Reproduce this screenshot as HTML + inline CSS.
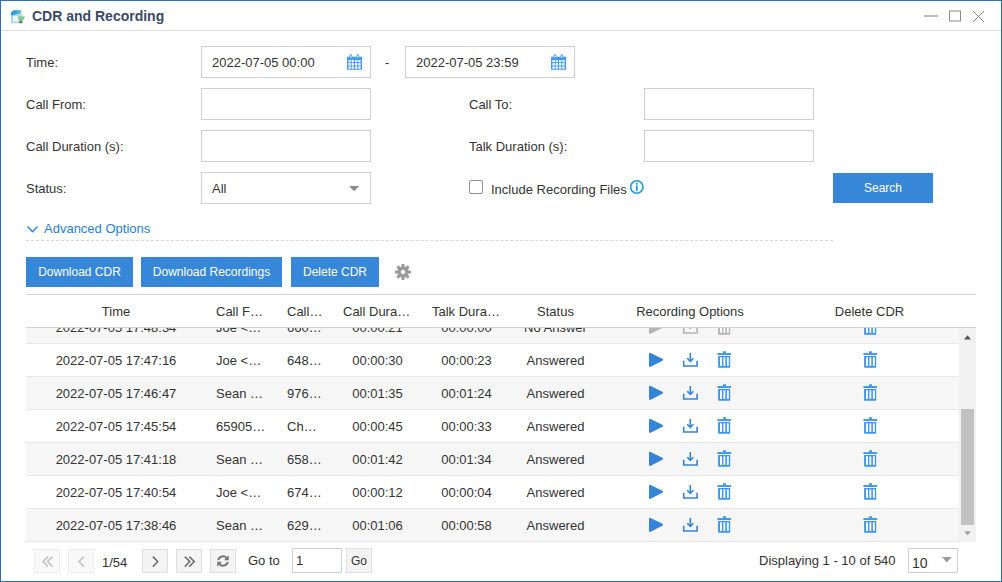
<!DOCTYPE html>
<html><head><meta charset="utf-8">
<style>
*{box-sizing:border-box;margin:0;padding:0}
html,body{width:1002px;height:582px;overflow:hidden;background:#fff}
body{font-family:"Liberation Sans",sans-serif;color:#333;font-size:13px;position:relative}
.win{position:absolute;left:0;top:0;width:1002px;height:582px;border:1px solid #2c71b4;background:#fff}
.a{position:absolute;white-space:nowrap}
.title{left:32px;top:8px;font-weight:bold;font-size:14px;color:#3b4a67;line-height:17px}
.hline{position:absolute;left:1px;top:30px;width:1000px;height:1px;background:#dcdcdc}
.lbl{font-size:13px;line-height:15px;color:#333}
.inp{position:absolute;border:1px solid #cfcfcf;background:#fff;height:32px;width:170px}
.inp span{position:absolute;left:10px;top:8px;font-size:13px;line-height:15px;color:#333}
.btn{position:absolute;background:#3787d8;color:#fff;font-size:12px;text-align:center;height:30px;line-height:30px}
.grid{position:absolute;left:26px;top:294px;width:950px;height:248px;border-top:1px solid #d0d0d0}
.ghead{position:absolute;left:0;top:0;width:950px;height:33px;border-bottom:1px solid #d0d0d0;background:#fff;z-index:2}
.col{position:absolute;top:1px;height:31px;line-height:32px;text-align:center;overflow:hidden;text-overflow:ellipsis;white-space:nowrap;padding:0 10px;font-size:13px}
.body{position:absolute;left:0;top:33px;width:933px;height:214px;overflow:hidden}
.row{position:absolute;left:0;width:933px;height:33px;border-bottom:1px solid #e8e8e8;background:#fff}
.row.alt{background:#f6f6f6}
.cell{position:absolute;top:1px;height:32px;line-height:32px;overflow:hidden;text-overflow:ellipsis;white-space:nowrap;padding:0 10px;font-size:13px;color:#333}
.c0{left:0;width:180px;text-align:center}
.c1{left:180px;width:71px;text-align:left}
.c2{left:251px;width:56px;text-align:left}
.c3{left:307px;width:89px;text-align:center}
.c4{left:396px;width:89px;text-align:center}
.c5{left:485px;width:89px;text-align:center}
.c6{left:574px;width:180px;text-align:center}
.c7{left:754px;width:179px;text-align:center}
.ico{position:absolute}
.sb{position:absolute;left:933px;top:33px;width:17px;height:214px;background:#f1f1f1}
.pbtn{position:absolute;top:549px;width:26px;height:24px;border:1px solid #e0e0e0;background:#f4f4f4}
.pbtn.dis{border-color:#ececec;background:#f9f9f9}
</style></head><body>
<div class="win"></div>
<!-- title bar -->
<svg class="ico" style="left:10px;top:9px" width="16" height="15" viewBox="0 0 16 15"><defs><linearGradient id="tg" x1="0" y1="1" x2="1" y2="0"><stop offset="0" stop-color="#1787c0"/><stop offset="1" stop-color="#5cc6ea"/></linearGradient></defs><path d="M1 3.2 L3.5 0.9 L10.7 0.9 L10.7 14.2 L1 14.2 Z" fill="#9fd8f0"/><path d="M1.3 3 L4.2 0.9 L10.7 0.9 L10.7 4.8 L8.6 4.6 L1.1 6.4 Z" fill="url(#tg)"/><rect x="3.1" y="6.9" width="5.5" height="5.8" fill="#f2f4f4"/><rect x="9" y="5.1" width="3.5" height="2.5" fill="#d4d4d4"/><path d="M7.8 7.6 Q11.3 6.8 14.9 7.6 Q14.6 10.2 12.3 11.9 L9.9 11.9 Q8.1 10.2 7.8 7.6 Z" fill="#7acb8c"/><rect x="9.3" y="11.9" width="3" height="2.3" fill="#707070"/></svg>
<div class="a title">CDR and Recording</div>
<div class="a" style="left:924px;top:15px;width:14px;height:2px;background:#bdbdbd"></div>
<svg class="ico" style="left:949px;top:10px" width="13" height="13" viewBox="0 0 13 13"><rect x="0.5" y="1" width="11" height="10" fill="none" stroke="#8a8a8a" stroke-width="1"/></svg>
<svg class="ico" style="left:972px;top:10px" width="13" height="13" viewBox="0 0 13 13"><path d="M1 1 L12 12 M12 1 L1 12" stroke="#7a7a7a" stroke-width="0.9"/></svg>
<div class="hline"></div>

<!-- form -->
<div class="a lbl" style="left:26px;top:55px">Time:</div>
<div class="inp" style="left:201px;top:46px"><span>2022-07-05 00:00</span></div>
<div class="a lbl" style="left:385px;top:55px">-</div>
<div class="inp" style="left:405px;top:46px"><span>2022-07-05 23:59</span></div>

<div class="a lbl" style="left:26px;top:97px">Call From:</div>
<div class="inp" style="left:201px;top:88px"></div>
<div class="a lbl" style="left:469px;top:97px">Call To:</div>
<div class="inp" style="left:644px;top:88px"></div>

<div class="a lbl" style="left:26px;top:139px">Call Duration (s):</div>
<div class="inp" style="left:201px;top:130px"></div>
<div class="a lbl" style="left:469px;top:139px">Talk Duration (s):</div>
<div class="inp" style="left:644px;top:130px"></div>

<div class="a lbl" style="left:26px;top:181px">Status:</div>
<div class="inp" style="left:201px;top:172px"><span>All</span></div>

<div class="a" style="left:469px;top:180px;width:14px;height:14px;border:1px solid #8f8f8f;border-radius:2px"></div>
<div class="a lbl" style="left:491px;top:182px">Include Recording Files</div>

<div class="btn" style="left:833px;top:173px;width:100px">Search</div>

<div class="a lbl" style="left:44px;top:221px;color:#1f81db">Advanced Options</div>
<div class="a" style="left:26px;top:240px;width:807px;height:1px;border-top:1px dashed #d6d6d6"></div>

<div class="btn" style="left:26px;top:257px;width:107px">Download CDR</div>
<div class="btn" style="left:141px;top:257px;width:141px">Download Recordings</div>
<div class="btn" style="left:291px;top:257px;width:88px">Delete CDR</div>

<!-- grid -->
<div class="grid">
  <div class="ghead">
    <div class="col c0">Time</div>
    <div class="col c1" style="text-align:center">Call From</div>
    <div class="col c2" style="text-align:center">Call To</div>
    <div class="col c3">Call Duration</div>
    <div class="col c4">Talk Duration</div>
    <div class="col c5">Status</div>
    <div class="col c6">Recording Options</div>
    <div class="col c7">Delete CDR</div>
  </div>
  <div class="body" id="gbody"><!--ROWS-->
<div class="row alt" style="top:-17px"><div class="cell c0">2022-07-05 17:48:34</div><div class="cell c1">Joe &lt;1001&gt;</div><div class="cell c2">6601234</div><div class="cell c3">00:00:21</div><div class="cell c4">00:00:00</div><div class="cell c5">No Answer</div><div class="cell c6" style="padding:0"><svg class="ico" style="left:48px;top:7px" width="16" height="16" viewBox="0 0 16 16"><path d="M2.1 1.9 L13.9 7.85 L2.1 13.8 Z" fill="#b4b4b4" stroke="#b4b4b4" stroke-width="2.2" stroke-linejoin="round"/></svg><svg class="ico" style="left:82px;top:7px" width="17" height="16" viewBox="0 0 17 16"><path d="M1.7 8.7 V14 H15.1 V8.7" fill="none" stroke="#b4b4b4" stroke-width="1.6"/><path d="M8.3 1 V9" stroke="#b4b4b4" stroke-width="1.6"/><path d="M5.2 6.2 L8.3 9.4 L11.4 6.2" fill="none" stroke="#b4b4b4" stroke-width="1.6"/></svg><svg class="ico" style="left:117px;top:6px" width="15" height="17" viewBox="0 0 15 17"><rect x="6" y="0.3" width="3" height="2" fill="#b4b4b4"/><rect x="0.4" y="2.1" width="13.7" height="1.9" fill="#b4b4b4"/><path d="M1.1 4.9 H13.2 V15.9 Q13.2 16.7 12.4 16.7 H1.9 Q1.1 16.7 1.1 15.9 Z" fill="#b4b4b4"/><rect x="3" y="6.3" width="2" height="8.6" fill="#fff"/><rect x="6.4" y="6.3" width="1.9" height="8.6" fill="#fff"/><rect x="9.9" y="6.3" width="1.9" height="8.6" fill="#fff"/></svg></div><div class="cell c7" style="padding:0"><svg class="ico" style="left:83px;top:6px" width="15" height="17" viewBox="0 0 15 17"><rect x="6" y="0.3" width="3" height="2" fill="#3d97ef"/><rect x="0.4" y="2.1" width="13.7" height="1.9" fill="#3d97ef"/><path d="M1.1 4.9 H13.2 V15.9 Q13.2 16.7 12.4 16.7 H1.9 Q1.1 16.7 1.1 15.9 Z" fill="#3d97ef"/><rect x="3" y="6.3" width="2" height="8.6" fill="#fff"/><rect x="6.4" y="6.3" width="1.9" height="8.6" fill="#fff"/><rect x="9.9" y="6.3" width="1.9" height="8.6" fill="#fff"/></svg></div></div>
<div class="row" style="top:16px"><div class="cell c0">2022-07-05 17:47:16</div><div class="cell c1">Joe &lt;1001&gt;</div><div class="cell c2">6481234</div><div class="cell c3">00:00:30</div><div class="cell c4">00:00:23</div><div class="cell c5">Answered</div><div class="cell c6" style="padding:0"><svg class="ico" style="left:48px;top:7px" width="16" height="16" viewBox="0 0 16 16"><path d="M2.1 1.9 L13.9 7.85 L2.1 13.8 Z" fill="#3585d6" stroke="#3585d6" stroke-width="2.2" stroke-linejoin="round"/></svg><svg class="ico" style="left:82px;top:7px" width="17" height="16" viewBox="0 0 17 16"><path d="M1.7 8.7 V14 H15.1 V8.7" fill="none" stroke="#3585d6" stroke-width="1.6"/><path d="M8.3 1 V9" stroke="#3585d6" stroke-width="1.6"/><path d="M5.2 6.2 L8.3 9.4 L11.4 6.2" fill="none" stroke="#3585d6" stroke-width="1.6"/></svg><svg class="ico" style="left:117px;top:6px" width="15" height="17" viewBox="0 0 15 17"><rect x="6" y="0.3" width="3" height="2" fill="#3d97ef"/><rect x="0.4" y="2.1" width="13.7" height="1.9" fill="#3d97ef"/><path d="M1.1 4.9 H13.2 V15.9 Q13.2 16.7 12.4 16.7 H1.9 Q1.1 16.7 1.1 15.9 Z" fill="#3d97ef"/><rect x="3" y="6.3" width="2" height="8.6" fill="#fff"/><rect x="6.4" y="6.3" width="1.9" height="8.6" fill="#fff"/><rect x="9.9" y="6.3" width="1.9" height="8.6" fill="#fff"/></svg></div><div class="cell c7" style="padding:0"><svg class="ico" style="left:83px;top:6px" width="15" height="17" viewBox="0 0 15 17"><rect x="6" y="0.3" width="3" height="2" fill="#3d97ef"/><rect x="0.4" y="2.1" width="13.7" height="1.9" fill="#3d97ef"/><path d="M1.1 4.9 H13.2 V15.9 Q13.2 16.7 12.4 16.7 H1.9 Q1.1 16.7 1.1 15.9 Z" fill="#3d97ef"/><rect x="3" y="6.3" width="2" height="8.6" fill="#fff"/><rect x="6.4" y="6.3" width="1.9" height="8.6" fill="#fff"/><rect x="9.9" y="6.3" width="1.9" height="8.6" fill="#fff"/></svg></div></div>
<div class="row alt" style="top:49px"><div class="cell c0">2022-07-05 17:46:47</div><div class="cell c1">Sean &lt;1002&gt;</div><div class="cell c2">9761234</div><div class="cell c3">00:01:35</div><div class="cell c4">00:01:24</div><div class="cell c5">Answered</div><div class="cell c6" style="padding:0"><svg class="ico" style="left:48px;top:7px" width="16" height="16" viewBox="0 0 16 16"><path d="M2.1 1.9 L13.9 7.85 L2.1 13.8 Z" fill="#3585d6" stroke="#3585d6" stroke-width="2.2" stroke-linejoin="round"/></svg><svg class="ico" style="left:82px;top:7px" width="17" height="16" viewBox="0 0 17 16"><path d="M1.7 8.7 V14 H15.1 V8.7" fill="none" stroke="#3585d6" stroke-width="1.6"/><path d="M8.3 1 V9" stroke="#3585d6" stroke-width="1.6"/><path d="M5.2 6.2 L8.3 9.4 L11.4 6.2" fill="none" stroke="#3585d6" stroke-width="1.6"/></svg><svg class="ico" style="left:117px;top:6px" width="15" height="17" viewBox="0 0 15 17"><rect x="6" y="0.3" width="3" height="2" fill="#3d97ef"/><rect x="0.4" y="2.1" width="13.7" height="1.9" fill="#3d97ef"/><path d="M1.1 4.9 H13.2 V15.9 Q13.2 16.7 12.4 16.7 H1.9 Q1.1 16.7 1.1 15.9 Z" fill="#3d97ef"/><rect x="3" y="6.3" width="2" height="8.6" fill="#fff"/><rect x="6.4" y="6.3" width="1.9" height="8.6" fill="#fff"/><rect x="9.9" y="6.3" width="1.9" height="8.6" fill="#fff"/></svg></div><div class="cell c7" style="padding:0"><svg class="ico" style="left:83px;top:6px" width="15" height="17" viewBox="0 0 15 17"><rect x="6" y="0.3" width="3" height="2" fill="#3d97ef"/><rect x="0.4" y="2.1" width="13.7" height="1.9" fill="#3d97ef"/><path d="M1.1 4.9 H13.2 V15.9 Q13.2 16.7 12.4 16.7 H1.9 Q1.1 16.7 1.1 15.9 Z" fill="#3d97ef"/><rect x="3" y="6.3" width="2" height="8.6" fill="#fff"/><rect x="6.4" y="6.3" width="1.9" height="8.6" fill="#fff"/><rect x="9.9" y="6.3" width="1.9" height="8.6" fill="#fff"/></svg></div></div>
<div class="row" style="top:82px"><div class="cell c0">2022-07-05 17:45:54</div><div class="cell c1">6590512345</div><div class="cell c2">Charlie</div><div class="cell c3">00:00:45</div><div class="cell c4">00:00:33</div><div class="cell c5">Answered</div><div class="cell c6" style="padding:0"><svg class="ico" style="left:48px;top:7px" width="16" height="16" viewBox="0 0 16 16"><path d="M2.1 1.9 L13.9 7.85 L2.1 13.8 Z" fill="#3585d6" stroke="#3585d6" stroke-width="2.2" stroke-linejoin="round"/></svg><svg class="ico" style="left:82px;top:7px" width="17" height="16" viewBox="0 0 17 16"><path d="M1.7 8.7 V14 H15.1 V8.7" fill="none" stroke="#3585d6" stroke-width="1.6"/><path d="M8.3 1 V9" stroke="#3585d6" stroke-width="1.6"/><path d="M5.2 6.2 L8.3 9.4 L11.4 6.2" fill="none" stroke="#3585d6" stroke-width="1.6"/></svg><svg class="ico" style="left:117px;top:6px" width="15" height="17" viewBox="0 0 15 17"><rect x="6" y="0.3" width="3" height="2" fill="#3d97ef"/><rect x="0.4" y="2.1" width="13.7" height="1.9" fill="#3d97ef"/><path d="M1.1 4.9 H13.2 V15.9 Q13.2 16.7 12.4 16.7 H1.9 Q1.1 16.7 1.1 15.9 Z" fill="#3d97ef"/><rect x="3" y="6.3" width="2" height="8.6" fill="#fff"/><rect x="6.4" y="6.3" width="1.9" height="8.6" fill="#fff"/><rect x="9.9" y="6.3" width="1.9" height="8.6" fill="#fff"/></svg></div><div class="cell c7" style="padding:0"><svg class="ico" style="left:83px;top:6px" width="15" height="17" viewBox="0 0 15 17"><rect x="6" y="0.3" width="3" height="2" fill="#3d97ef"/><rect x="0.4" y="2.1" width="13.7" height="1.9" fill="#3d97ef"/><path d="M1.1 4.9 H13.2 V15.9 Q13.2 16.7 12.4 16.7 H1.9 Q1.1 16.7 1.1 15.9 Z" fill="#3d97ef"/><rect x="3" y="6.3" width="2" height="8.6" fill="#fff"/><rect x="6.4" y="6.3" width="1.9" height="8.6" fill="#fff"/><rect x="9.9" y="6.3" width="1.9" height="8.6" fill="#fff"/></svg></div></div>
<div class="row alt" style="top:115px"><div class="cell c0">2022-07-05 17:41:18</div><div class="cell c1">Sean &lt;1002&gt;</div><div class="cell c2">6581234</div><div class="cell c3">00:01:42</div><div class="cell c4">00:01:34</div><div class="cell c5">Answered</div><div class="cell c6" style="padding:0"><svg class="ico" style="left:48px;top:7px" width="16" height="16" viewBox="0 0 16 16"><path d="M2.1 1.9 L13.9 7.85 L2.1 13.8 Z" fill="#3585d6" stroke="#3585d6" stroke-width="2.2" stroke-linejoin="round"/></svg><svg class="ico" style="left:82px;top:7px" width="17" height="16" viewBox="0 0 17 16"><path d="M1.7 8.7 V14 H15.1 V8.7" fill="none" stroke="#3585d6" stroke-width="1.6"/><path d="M8.3 1 V9" stroke="#3585d6" stroke-width="1.6"/><path d="M5.2 6.2 L8.3 9.4 L11.4 6.2" fill="none" stroke="#3585d6" stroke-width="1.6"/></svg><svg class="ico" style="left:117px;top:6px" width="15" height="17" viewBox="0 0 15 17"><rect x="6" y="0.3" width="3" height="2" fill="#3d97ef"/><rect x="0.4" y="2.1" width="13.7" height="1.9" fill="#3d97ef"/><path d="M1.1 4.9 H13.2 V15.9 Q13.2 16.7 12.4 16.7 H1.9 Q1.1 16.7 1.1 15.9 Z" fill="#3d97ef"/><rect x="3" y="6.3" width="2" height="8.6" fill="#fff"/><rect x="6.4" y="6.3" width="1.9" height="8.6" fill="#fff"/><rect x="9.9" y="6.3" width="1.9" height="8.6" fill="#fff"/></svg></div><div class="cell c7" style="padding:0"><svg class="ico" style="left:83px;top:6px" width="15" height="17" viewBox="0 0 15 17"><rect x="6" y="0.3" width="3" height="2" fill="#3d97ef"/><rect x="0.4" y="2.1" width="13.7" height="1.9" fill="#3d97ef"/><path d="M1.1 4.9 H13.2 V15.9 Q13.2 16.7 12.4 16.7 H1.9 Q1.1 16.7 1.1 15.9 Z" fill="#3d97ef"/><rect x="3" y="6.3" width="2" height="8.6" fill="#fff"/><rect x="6.4" y="6.3" width="1.9" height="8.6" fill="#fff"/><rect x="9.9" y="6.3" width="1.9" height="8.6" fill="#fff"/></svg></div></div>
<div class="row" style="top:148px"><div class="cell c0">2022-07-05 17:40:54</div><div class="cell c1">Joe &lt;1001&gt;</div><div class="cell c2">6741234</div><div class="cell c3">00:00:12</div><div class="cell c4">00:00:04</div><div class="cell c5">Answered</div><div class="cell c6" style="padding:0"><svg class="ico" style="left:48px;top:7px" width="16" height="16" viewBox="0 0 16 16"><path d="M2.1 1.9 L13.9 7.85 L2.1 13.8 Z" fill="#3585d6" stroke="#3585d6" stroke-width="2.2" stroke-linejoin="round"/></svg><svg class="ico" style="left:82px;top:7px" width="17" height="16" viewBox="0 0 17 16"><path d="M1.7 8.7 V14 H15.1 V8.7" fill="none" stroke="#3585d6" stroke-width="1.6"/><path d="M8.3 1 V9" stroke="#3585d6" stroke-width="1.6"/><path d="M5.2 6.2 L8.3 9.4 L11.4 6.2" fill="none" stroke="#3585d6" stroke-width="1.6"/></svg><svg class="ico" style="left:117px;top:6px" width="15" height="17" viewBox="0 0 15 17"><rect x="6" y="0.3" width="3" height="2" fill="#3d97ef"/><rect x="0.4" y="2.1" width="13.7" height="1.9" fill="#3d97ef"/><path d="M1.1 4.9 H13.2 V15.9 Q13.2 16.7 12.4 16.7 H1.9 Q1.1 16.7 1.1 15.9 Z" fill="#3d97ef"/><rect x="3" y="6.3" width="2" height="8.6" fill="#fff"/><rect x="6.4" y="6.3" width="1.9" height="8.6" fill="#fff"/><rect x="9.9" y="6.3" width="1.9" height="8.6" fill="#fff"/></svg></div><div class="cell c7" style="padding:0"><svg class="ico" style="left:83px;top:6px" width="15" height="17" viewBox="0 0 15 17"><rect x="6" y="0.3" width="3" height="2" fill="#3d97ef"/><rect x="0.4" y="2.1" width="13.7" height="1.9" fill="#3d97ef"/><path d="M1.1 4.9 H13.2 V15.9 Q13.2 16.7 12.4 16.7 H1.9 Q1.1 16.7 1.1 15.9 Z" fill="#3d97ef"/><rect x="3" y="6.3" width="2" height="8.6" fill="#fff"/><rect x="6.4" y="6.3" width="1.9" height="8.6" fill="#fff"/><rect x="9.9" y="6.3" width="1.9" height="8.6" fill="#fff"/></svg></div></div>
<div class="row alt" style="top:181px"><div class="cell c0">2022-07-05 17:38:46</div><div class="cell c1">Sean &lt;1002&gt;</div><div class="cell c2">6291234</div><div class="cell c3">00:01:06</div><div class="cell c4">00:00:58</div><div class="cell c5">Answered</div><div class="cell c6" style="padding:0"><svg class="ico" style="left:48px;top:7px" width="16" height="16" viewBox="0 0 16 16"><path d="M2.1 1.9 L13.9 7.85 L2.1 13.8 Z" fill="#3585d6" stroke="#3585d6" stroke-width="2.2" stroke-linejoin="round"/></svg><svg class="ico" style="left:82px;top:7px" width="17" height="16" viewBox="0 0 17 16"><path d="M1.7 8.7 V14 H15.1 V8.7" fill="none" stroke="#3585d6" stroke-width="1.6"/><path d="M8.3 1 V9" stroke="#3585d6" stroke-width="1.6"/><path d="M5.2 6.2 L8.3 9.4 L11.4 6.2" fill="none" stroke="#3585d6" stroke-width="1.6"/></svg><svg class="ico" style="left:117px;top:6px" width="15" height="17" viewBox="0 0 15 17"><rect x="6" y="0.3" width="3" height="2" fill="#3d97ef"/><rect x="0.4" y="2.1" width="13.7" height="1.9" fill="#3d97ef"/><path d="M1.1 4.9 H13.2 V15.9 Q13.2 16.7 12.4 16.7 H1.9 Q1.1 16.7 1.1 15.9 Z" fill="#3d97ef"/><rect x="3" y="6.3" width="2" height="8.6" fill="#fff"/><rect x="6.4" y="6.3" width="1.9" height="8.6" fill="#fff"/><rect x="9.9" y="6.3" width="1.9" height="8.6" fill="#fff"/></svg></div><div class="cell c7" style="padding:0"><svg class="ico" style="left:83px;top:6px" width="15" height="17" viewBox="0 0 15 17"><rect x="6" y="0.3" width="3" height="2" fill="#3d97ef"/><rect x="0.4" y="2.1" width="13.7" height="1.9" fill="#3d97ef"/><path d="M1.1 4.9 H13.2 V15.9 Q13.2 16.7 12.4 16.7 H1.9 Q1.1 16.7 1.1 15.9 Z" fill="#3d97ef"/><rect x="3" y="6.3" width="2" height="8.6" fill="#fff"/><rect x="6.4" y="6.3" width="1.9" height="8.6" fill="#fff"/><rect x="9.9" y="6.3" width="1.9" height="8.6" fill="#fff"/></svg></div></div>
<!--/ROWS--></div>
  <div class="sb"></div>
</div>

<!-- pager -->
<div class="pbtn dis" style="left:34px"></div>
<div class="pbtn dis" style="left:68px"></div>
<div class="a lbl" style="left:102px;top:555px">1/54</div>
<div class="pbtn" style="left:142px"></div>
<div class="pbtn" style="left:176px"></div>
<div class="pbtn" style="left:210px"></div>
<div class="a lbl" style="left:248px;top:553px">Go to</div>
<div class="a" style="left:292px;top:548px;width:50px;height:25px;border:1px solid #cfcfcf"></div>
<div class="a lbl" style="left:296px;top:553px">1</div>
<div class="a" style="left:346px;top:548px;width:26px;height:25px;border:1px solid #e0e0e0;background:#f3f3f3"></div>
<div class="a" style="left:351px;top:554px;font-size:12px;line-height:14px">Go</div>
<div class="a lbl" style="left:759px;top:553px">Displaying 1 - 10 of 540</div>
<div class="a" style="left:908px;top:548px;width:50px;height:25px;border:1px solid #cfcfcf"></div>
<div class="a" style="left:912px;top:555px;font-size:14px;line-height:16px">10</div>
<svg class="ico" style="left:347px;top:54px" width="16" height="16" viewBox="0 0 16 16"><rect x="0" y="2.8" width="15.1" height="12.9" rx="0.5" fill="#4499f2"/><ellipse cx="3.9" cy="2.5" rx="1.4" ry="2.5" fill="#4499f2"/><ellipse cx="10.8" cy="2.5" rx="1.4" ry="2.5" fill="#4499f2"/><ellipse cx="3.9" cy="2.6" rx="0.55" ry="1.6" fill="#e6f1fd"/><ellipse cx="10.8" cy="2.6" rx="0.55" ry="1.6" fill="#e6f1fd"/><rect x="1.4" y="6" width="2.3" height="2.2" fill="#fff"/><rect x="1.4" y="9.1" width="2.3" height="2.5" fill="#fff"/><rect x="1.4" y="12.5" width="2.3" height="2.2" fill="#fff"/><rect x="4.6" y="6" width="2.3" height="2.2" fill="#fff"/><rect x="4.6" y="9.1" width="2.3" height="2.5" fill="#fff"/><rect x="4.6" y="12.5" width="2.3" height="2.2" fill="#fff"/><rect x="8.0" y="6" width="2.3" height="2.2" fill="#fff"/><rect x="8.0" y="9.1" width="2.3" height="2.5" fill="#fff"/><rect x="8.0" y="12.5" width="2.3" height="2.2" fill="#fff"/><rect x="11.3" y="6" width="2.3" height="2.2" fill="#fff"/><rect x="11.3" y="9.1" width="2.3" height="2.5" fill="#fff"/><rect x="11.3" y="12.5" width="2.3" height="2.2" fill="#fff"/></svg><svg class="ico" style="left:551px;top:54px" width="16" height="16" viewBox="0 0 16 16"><rect x="0" y="2.8" width="15.1" height="12.9" rx="0.5" fill="#4499f2"/><ellipse cx="3.9" cy="2.5" rx="1.4" ry="2.5" fill="#4499f2"/><ellipse cx="10.8" cy="2.5" rx="1.4" ry="2.5" fill="#4499f2"/><ellipse cx="3.9" cy="2.6" rx="0.55" ry="1.6" fill="#e6f1fd"/><ellipse cx="10.8" cy="2.6" rx="0.55" ry="1.6" fill="#e6f1fd"/><rect x="1.4" y="6" width="2.3" height="2.2" fill="#fff"/><rect x="1.4" y="9.1" width="2.3" height="2.5" fill="#fff"/><rect x="1.4" y="12.5" width="2.3" height="2.2" fill="#fff"/><rect x="4.6" y="6" width="2.3" height="2.2" fill="#fff"/><rect x="4.6" y="9.1" width="2.3" height="2.5" fill="#fff"/><rect x="4.6" y="12.5" width="2.3" height="2.2" fill="#fff"/><rect x="8.0" y="6" width="2.3" height="2.2" fill="#fff"/><rect x="8.0" y="9.1" width="2.3" height="2.5" fill="#fff"/><rect x="8.0" y="12.5" width="2.3" height="2.2" fill="#fff"/><rect x="11.3" y="6" width="2.3" height="2.2" fill="#fff"/><rect x="11.3" y="9.1" width="2.3" height="2.5" fill="#fff"/><rect x="11.3" y="12.5" width="2.3" height="2.2" fill="#fff"/></svg><svg class="ico" style="left:349px;top:186px" width="11" height="6" viewBox="0 0 11 6"><path d="M0 0 H10.2 L5.1 5.2 Z" fill="#8c8c8c"/></svg><svg class="ico" style="left:629px;top:180px" width="16" height="15" viewBox="0 0 16 15"><circle cx="7.8" cy="7" r="6.2" fill="none" stroke="#1e9ad6" stroke-width="1.6"/><rect x="6.9" y="3" width="1.8" height="1.7" fill="#1e9ad6"/><rect x="6.9" y="5.4" width="1.8" height="5.4" fill="#1e9ad6"/></svg><svg class="ico" style="left:26px;top:225px" width="13" height="9" viewBox="0 0 13 9"><path d="M1.5 1.5 L6.5 6.8 L11.5 1.5" fill="none" stroke="#1f81db" stroke-width="1.3"/></svg><svg class="ico" style="left:395px;top:264px" width="16" height="16" viewBox="-8 -8 16 16"><circle cx="0" cy="0" r="5.6" fill="#9a9a9a"/><rect x="-1.6" y="-8" width="3.2" height="4" rx="0.8" transform="rotate(0)" fill="#9a9a9a"/><rect x="-1.6" y="-8" width="3.2" height="4" rx="0.8" transform="rotate(45)" fill="#9a9a9a"/><rect x="-1.6" y="-8" width="3.2" height="4" rx="0.8" transform="rotate(90)" fill="#9a9a9a"/><rect x="-1.6" y="-8" width="3.2" height="4" rx="0.8" transform="rotate(135)" fill="#9a9a9a"/><rect x="-1.6" y="-8" width="3.2" height="4" rx="0.8" transform="rotate(180)" fill="#9a9a9a"/><rect x="-1.6" y="-8" width="3.2" height="4" rx="0.8" transform="rotate(225)" fill="#9a9a9a"/><rect x="-1.6" y="-8" width="3.2" height="4" rx="0.8" transform="rotate(270)" fill="#9a9a9a"/><rect x="-1.6" y="-8" width="3.2" height="4" rx="0.8" transform="rotate(315)" fill="#9a9a9a"/><circle cx="0" cy="0" r="2.2" fill="#fff"/></svg><div class="a" style="left:961px;top:409px;width:13px;height:116px;background:#c1c1c1"></div><svg class="ico" style="left:964px;top:335px" width="8" height="5" viewBox="0 0 8 5"><path d="M0 4.5 L3.5 0.3 L7 4.5 Z" fill="#505050"/></svg><svg class="ico" style="left:964px;top:531px" width="8" height="5" viewBox="0 0 8 5"><path d="M0 0.3 L7 0.3 L3.5 4.3 Z" fill="#a3a3a3"/></svg><svg class="ico" style="left:216px;top:554px" width="14" height="14" viewBox="0 0 14 14"><path d="M2.2 6 A4.9 4.9 0 0 1 10.8 4.2" fill="none" stroke="#777" stroke-width="2.1"/><path d="M12.8 1.3 V6.2 H8 Z" fill="#777"/><path d="M11.8 8 A4.9 4.9 0 0 1 3.2 9.8" fill="none" stroke="#777" stroke-width="2.1"/><path d="M1.2 12.7 V7.8 H6 Z" fill="#777"/></svg><svg class="ico" style="left:942px;top:557px" width="10" height="6" viewBox="0 0 10 6"><path d="M0 0 H9.6 L4.8 5.4 Z" fill="#999"/></svg>
<svg class="ico" style="left:42px;top:556px" width="12" height="12" viewBox="0 0 12 12"><path d="M6 0.6 L1 5.6 L6 10.6" fill="none" stroke="#c2c2c2" stroke-width="1.5"/><path d="M10.5 0.6 L5.5 5.6 L10.5 10.6" fill="none" stroke="#c2c2c2" stroke-width="1.5"/></svg><svg class="ico" style="left:78px;top:556px" width="12" height="12" viewBox="0 0 12 12"><path d="M6 0.6 L1 5.6 L6 10.6" fill="none" stroke="#c2c2c2" stroke-width="1.5"/></svg><svg class="ico" style="left:152px;top:556px" width="12" height="12" viewBox="0 0 12 12"><path d="M0.8 0.6 L5.8 5.6 L0.8 10.6" fill="none" stroke="#6e6e6e" stroke-width="1.5"/></svg><svg class="ico" style="left:184px;top:556px" width="12" height="12" viewBox="0 0 12 12"><path d="M0.8 0.6 L5.8 5.6 L0.8 10.6" fill="none" stroke="#6e6e6e" stroke-width="1.5"/><path d="M5.3 0.6 L10.3 5.6 L5.3 10.6" fill="none" stroke="#6e6e6e" stroke-width="1.5"/></svg>
</body></html>
